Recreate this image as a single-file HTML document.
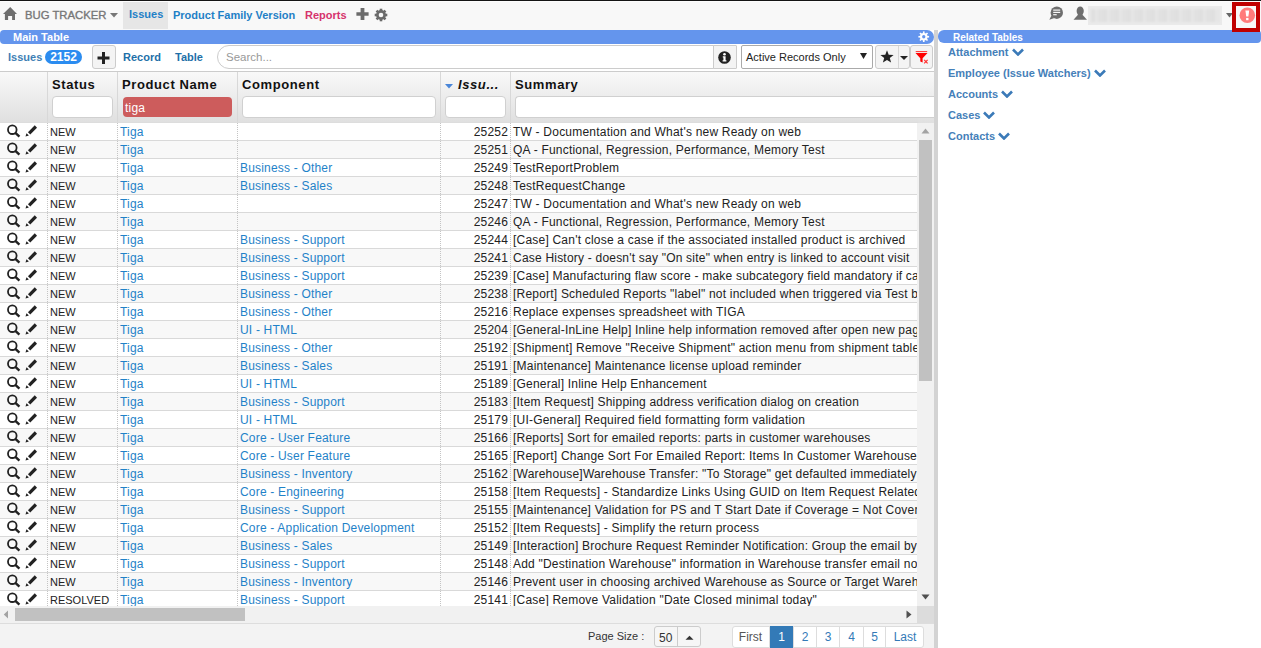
<!DOCTYPE html>
<html><head><meta charset="utf-8">
<style>
*{box-sizing:border-box}
html,body{margin:0;padding:0}
body{width:1261px;height:648px;overflow:hidden;position:relative;background:#fff;font-family:"Liberation Sans",sans-serif;color:#222}
.a{position:absolute}
#topline{left:0;top:0;width:1261px;height:1px;background:#141414}
#nav{left:0;top:1px;width:1261px;height:29px;background:#f8f8f8;border-top:1px solid #fdfdfd}
.navt{position:absolute;font-size:11px;font-weight:bold;line-height:14px;white-space:nowrap}
#brand{left:25px;top:8px;font-size:11.3px;color:#777;font-weight:normal!important;-webkit-text-stroke:0.35px #777}
#tabIssues{left:123px;top:2px;width:45px;height:27px;background:#e6e6e6}
#tIssues{left:129px;top:7px;color:#1f80c6}
#tPFV{left:173px;top:8px;color:#1f80c6}
#tRep{left:305px;top:8px;color:#d6336c}
#blur{left:1088px;top:6px;width:134px;height:19px;background:#eaeaea;overflow:hidden}
#blur i{position:absolute;left:3px;top:3px;right:3px;bottom:3px;background:repeating-linear-gradient(90deg,#dfdfdf 0 4px,#e6e6e6 4px 7px,#e1e1e1 7px 12px);filter:blur(1.2px)}
#alertbox{left:1232px;top:2px;width:28px;height:30px;border:4px solid #c00000;background:#f8f8f8;z-index:5}
#mainbar{left:0;top:30px;width:934px;height:14px;background:#6495ed;border-radius:4px 7px 7px 4px}
#mainbar span{position:absolute;left:13px;top:0px;font:bold 11px/14px "Liberation Sans",sans-serif;color:#fff}
#relbar{left:938px;top:30px;width:323px;height:13px;background:#6495ed;border-radius:6px 4px 4px 6px}
#relbar span{position:absolute;left:15px;top:1px;font:bold 10px/13px "Liberation Sans",sans-serif;color:#fff}
#divider{left:934px;top:30px;width:4px;height:618px;background:#d3d3d3}
.rel{position:absolute;left:948px;font:bold 11px/14px "Liberation Sans",sans-serif;color:#4580b9;white-space:nowrap}
.rel svg{vertical-align:middle;margin-left:3px;position:relative;top:-1px}
/* toolbar */
#lblIssues{left:8px;top:50px;font:bold 11px/14px "Liberation Sans",sans-serif;color:#3f7fb5}
#badge{left:45px;top:50px;width:37px;height:14px;border-radius:7px;background:#2b8cf0;color:#fff;font:bold 12px/14px "Liberation Sans",sans-serif;text-align:center}
#btnPlus{left:92px;top:45px;width:24px;height:24px;background:#f4f4f4;border:1px solid #ccc;border-radius:3px}
#lblRecord{left:123px;top:50px;font:bold 11px/14px "Liberation Sans",sans-serif;color:#1e6fa8}
#lblTable{left:175px;top:50px;font:bold 11px/14px "Liberation Sans",sans-serif;color:#1e6fa8}
#search{left:217px;top:45px;width:497px;height:24px;border:1px solid #ccc;border-radius:12px 0 0 12px;background:#fff}
#search span{position:absolute;left:8px;top:4px;font:11.5px/14px "Liberation Sans",sans-serif;color:#999}
#btnInfo{left:713px;top:45px;width:24px;height:24px;background:#f4f4f4;border:1px solid #ccc;border-radius:0 1px 1px 0}
#select{left:741px;top:45px;width:132px;height:24px;border:1px solid #aaa;border-radius:2px;background:#fff}
#select span{position:absolute;left:4px;top:4px;font:11px/14px "Liberation Sans",sans-serif;color:#222}
#btnStar{left:875px;top:45px;width:35px;height:24px;background:#f4f4f4;border:1px solid #ccc;border-radius:3px}
#btnFilt{left:910px;top:45px;width:23px;height:24px;background:#f4f4f4;border:1px solid #ccc;border-radius:3px}
/* grid header */
#ghead{left:0;top:71px;width:918px;height:52px;border-top:1px solid #ccc;border-bottom:1px solid #ddd;background:linear-gradient(#f9f9f9,#e0e0e0)}
#gheadR{left:918px;top:71px;width:16px;height:52px;border-top:1px solid #ccc;background:linear-gradient(#f9f9f9,#e0e0e0)}
.hsep{position:absolute;top:72px;width:1px;height:50px;background:#d8d8d8}
.ht{position:absolute;top:77px;font:bold 13px/15px "Liberation Sans",sans-serif;letter-spacing:0.6px;color:#111;white-space:nowrap}
.fb{position:absolute;top:96px;height:22px;background:#fff;border:1px solid #d0d0d0;border-radius:4px}
/* rows */
.r{position:absolute;left:0;width:918px;height:18px;background:#fff;border-bottom:1px solid #d9d9d9;white-space:nowrap;overflow:hidden}
.r.alt{background:#f8f8f8}
.r .mg{position:absolute;left:6px;top:1px}
.r .pn{position:absolute;left:24px;top:1px}
.c{position:absolute;top:2px;font:12px/14px "Liberation Sans",sans-serif;letter-spacing:0.19px;color:#222}
.st{left:50px;font-size:11px;letter-spacing:0;top:2px}
.pr{left:120px;color:#1f82c8}
.co{left:240px;color:#1f82c8}
.no{left:440px;width:68px;text-align:right}
.su{left:513px;letter-spacing:0.21px}
.vsep{position:absolute;top:123px;width:1px;height:483px;border-left:1px dotted #c4c4c4}
/* scrollbars */
#vscroll{left:917px;top:123px;width:17px;height:483px;background:#f1f1f1}
#vthumb{left:919px;top:140px;width:13px;height:241px;background:#c1c1c1}
#hscroll{left:0;top:606px;width:917px;height:17px;background:#f1f1f1}
#hthumb{left:15px;top:608px;width:230px;height:13px;background:#c1c1c1}
#corner{left:917px;top:606px;width:17px;height:17px;background:#dcdcdc}
#footer{left:0;top:623px;width:934px;height:25px;background:#f3f3f3;border-top:1px solid #ddd}
.ft{position:absolute;font:12px/14px "Liberation Sans",sans-serif;color:#333;white-space:nowrap}
#psize{left:654px;top:626px;width:47px;height:21px;border:1px solid #ccc;border-radius:3px;background:#f6f6f6}
#pager{left:732px;top:626px;width:192px;height:22px;border:1px solid #ddd;border-radius:3px;background:#fff}
.pg{position:absolute;top:626px;height:22px;border-left:1px solid #ddd;font:12px/22px "Liberation Sans",sans-serif;color:#337ab7;text-align:center}
</style></head><body>
<div id="topline" class="a"></div>
<div id="nav" class="a"></div>
<svg class="a" style="left:3px;top:6px" width="15" height="15" viewBox="0 0 15 15"><path d="M7.2 0.9 L14 7.9 L12 7.9 L12 14 L9.1 14 L9.1 10 L5.1 10 L5.1 14 L1.9 14 L1.9 7.9 L0 7.9 Z" fill="#6e6e6e"/></svg>
<span id="brand" class="navt">BUG TRACKER</span>
<svg class="a" style="left:110px;top:13px" width="8" height="5" viewBox="0 0 8 5"><path d="M0 0 L8 0 L4 4.5 Z" fill="#777"/></svg>
<div id="tabIssues" class="a"></div>
<span id="tIssues" class="navt">Issues</span>
<span id="tPFV" class="navt">Product Family Version</span>
<span id="tRep" class="navt">Reports</span>
<svg class="a" style="left:356px;top:8px" width="13" height="12" viewBox="0 0 13 12"><path d="M4.6 0 H8.4 V4.2 H12.6 V7.8 H8.4 V12 H4.6 V7.8 H0.4 V4.2 H4.6 Z" fill="#6b6b6b"/></svg>
<svg class="a" style="left:374px;top:8px" width="14" height="14" viewBox="0 0 14 14"><g fill="#6b6b6b"><circle cx="7" cy="7" r="4.9"/><rect x="5.7" y="0.7" width="2.6" height="12.6"/><rect x="0.7" y="5.7" width="12.6" height="2.6"/><rect x="5.7" y="0.7" width="2.6" height="12.6" transform="rotate(45 7 7)"/><rect x="5.7" y="0.7" width="2.6" height="12.6" transform="rotate(-45 7 7)"/></g><circle cx="7" cy="7" r="2.3" fill="#f8f8f8"/></svg>
<svg class="a" style="left:1049px;top:6px" width="15" height="15" viewBox="0 0 15 15"><circle cx="7.8" cy="6.7" r="6.2" fill="#6e6e6e"/><path d="M2.5 9.5 L0.3 13.8 L5.5 12 Z" fill="#6e6e6e"/><rect x="4.2" y="3.5" width="7" height="1.2" fill="#f8f8f8"/><rect x="4.2" y="5.8" width="7" height="1.2" fill="#f8f8f8"/><rect x="4.2" y="8.1" width="3.5" height="1.2" fill="#f8f8f8"/></svg>
<svg class="a" style="left:1073px;top:6px" width="15" height="15" viewBox="0 0 15 15"><ellipse cx="7.2" cy="5" rx="3.6" ry="4.6" fill="#6e6e6e"/><path d="M5.2 8.5 H9.2 L14 13.8 H0.5 Z" fill="#6e6e6e"/></svg>
<div id="blur" class="a"><i></i></div>
<svg class="a" style="left:1226px;top:13px" width="7" height="5" viewBox="0 0 7 5"><path d="M0 0 L7 0 L3.5 4.5 Z" fill="#666"/></svg>
<div id="alertbox" class="a"></div>
<svg class="a" style="left:1239px;top:7px;z-index:6" width="17" height="17" viewBox="0 0 17 17"><circle cx="8.3" cy="8.3" r="7.8" fill="#ff7b7b"/><path d="M6.4 3.4 H10.2 L9.4 9.6 H7.2 Z" fill="#fff"/><rect x="7.1" y="10.9" width="2.4" height="2.3" fill="#fff"/></svg>

<div id="mainbar" class="a"><span>Main Table</span></div>
<svg class="a" style="left:918px;top:30.5px" width="11.5" height="11.5" viewBox="0 0 14 14"><g fill="#fff"><circle cx="7" cy="7" r="4.6"/><rect x="6" y="0.5" width="2" height="13"/><rect x="0.5" y="6" width="13" height="2"/><rect x="6" y="0.5" width="2" height="13" transform="rotate(45 7 7)"/><rect x="6" y="0.5" width="2" height="13" transform="rotate(-45 7 7)"/></g><circle cx="7" cy="7" r="2" fill="#6495ed"/></svg>
<div id="divider" class="a"></div>
<div id="relbar" class="a"><span>Related Tables</span></div>
<div class="rel" style="top:45px">Attachment<svg width="12" height="8" viewBox="0 0 12 8"><path d="M1 1.5 L6 6.5 L11 1.5" fill="none" stroke="#3b7ab8" stroke-width="2.6"/></svg></div>
<div class="rel" style="top:66px">Employee (Issue Watchers)<svg width="12" height="8" viewBox="0 0 12 8"><path d="M1 1.5 L6 6.5 L11 1.5" fill="none" stroke="#3b7ab8" stroke-width="2.6"/></svg></div>
<div class="rel" style="top:87px">Accounts<svg width="12" height="8" viewBox="0 0 12 8"><path d="M1 1.5 L6 6.5 L11 1.5" fill="none" stroke="#3b7ab8" stroke-width="2.6"/></svg></div>
<div class="rel" style="top:108px">Cases<svg width="12" height="8" viewBox="0 0 12 8"><path d="M1 1.5 L6 6.5 L11 1.5" fill="none" stroke="#3b7ab8" stroke-width="2.6"/></svg></div>
<div class="rel" style="top:129px">Contacts<svg width="12" height="8" viewBox="0 0 12 8"><path d="M1 1.5 L6 6.5 L11 1.5" fill="none" stroke="#3b7ab8" stroke-width="2.6"/></svg></div>

<span id="lblIssues" class="a">Issues</span>
<div id="badge" class="a">2152</div>
<div id="btnPlus" class="a"></div>
<svg class="a" style="left:97px;top:52px" width="13" height="12" viewBox="0 0 13 12"><path d="M5 0 H8 V4.5 H12.5 V7.5 H8 V12 H5 V7.5 H0.5 V4.5 H5 Z" fill="#222"/></svg>
<span id="lblRecord" class="a">Record</span>
<span id="lblTable" class="a">Table</span>
<div id="search" class="a"><span>Search...</span></div>
<div id="btnInfo" class="a"></div>
<svg class="a" style="left:718px;top:51px" width="13" height="13" viewBox="0 0 13 13"><circle cx="6.5" cy="6.5" r="6.3" fill="#222"/><circle cx="6.5" cy="3.2" r="1.3" fill="#fff"/><path d="M4.8 5.2 H7.6 V9.2 H8.4 V10.6 H4.6 V9.2 H5.4 V6.5 H4.8 Z" fill="#fff"/></svg>
<div id="select" class="a"><span>Active Records Only</span></div>
<svg class="a" style="left:860px;top:53px" width="7" height="6" viewBox="0 0 7 6"><path d="M0 0 H7 L3.5 6 Z" fill="#222"/></svg>
<div id="btnStar" class="a"></div>
<div class="a" style="left:898px;top:46px;width:1px;height:22px;background:#d6d6d6"></div>
<svg class="a" style="left:880px;top:50px" width="14" height="13" viewBox="0 0 14 13"><path d="M7 0.3 L8.7 4.8 L13.6 4.9 L9.8 7.9 L11.1 12.6 L7 9.9 L2.9 12.6 L4.2 7.9 L0.4 4.9 L5.3 4.8 Z" fill="#222"/></svg>
<svg class="a" style="left:900px;top:56px" width="8" height="4" viewBox="0 0 8 4"><path d="M0 0 H8 L4 4 Z" fill="#222"/></svg>
<div id="btnFilt" class="a"></div>
<svg class="a" style="left:915px;top:51px" width="14" height="13" viewBox="0 0 14 13"><rect x="0.7" y="0" width="11.5" height="1.1" fill="#ff4040"/><path d="M0.5 2 H12.5 L7.6 7.2 V11.6 L5.3 10.6 V7.2 Z" fill="#ff0000"/><path d="M9.2 8.9 L12.6 12.3 M12.6 8.9 L9.2 12.3" stroke="#ff3030" stroke-width="1.2"/></svg>

<div id="ghead" class="a"></div>
<div id="gheadR" class="a"></div>
<div class="hsep" style="left:47px"></div>
<div class="hsep" style="left:117px"></div>
<div class="hsep" style="left:237px"></div>
<div class="hsep" style="left:440px"></div>
<div class="hsep" style="left:510px"></div>
<span class="ht" style="left:52px">Status</span>
<span class="ht" style="left:122px">Product Name</span>
<span class="ht" style="left:242px">Component</span>
<svg class="a" style="left:445px;top:84px" width="8" height="5" viewBox="0 0 8 5"><path d="M0 0 H8 L4 4.5 Z" fill="#4a86d8"/></svg>
<span class="ht" style="left:458px;font-style:italic">Issu...</span>
<span class="ht" style="left:515px">Summary</span>
<div class="fb" style="left:52px;width:61px"></div>
<div class="fb" style="left:123px;top:97px;width:109px;height:20px;background:#cd5c5c;border:none"><span style="position:absolute;left:2px;top:4px;font:12px/14px 'Liberation Sans',sans-serif;color:#fff;letter-spacing:0.2px">tiga</span></div>
<div class="fb" style="left:242px;width:194px"></div>
<div class="fb" style="left:445px;width:61px"></div>
<div class="fb" style="left:515px;width:419px;border-right:none;border-radius:4px 0 0 4px"></div>

<div class="r" style="top:123px"><svg class="mg" width="15" height="15" viewBox="0 0 15 15"><circle cx="6.3" cy="5.7" r="4.3" fill="none" stroke="#222" stroke-width="1.8"/><path d="M9.4 8.9 L13.4 12.7" stroke="#222" stroke-width="2.4"/></svg><svg class="pn" width="15" height="15" viewBox="0 0 15 15"><path d="M11.9 2.5 L5.1 9.3" stroke="#222" stroke-width="3.2"/><path d="M1.5 12.6 L2.5 9.2 L4.9 11.6 Z" fill="#222"/></svg><span class="c st">NEW</span><span class="c pr">Tiga</span><span class="c co"></span><span class="c no">25252</span><span class="c su">TW - Documentation and What's new Ready on web</span></div>
<div class="r alt" style="top:141px"><svg class="mg" width="15" height="15" viewBox="0 0 15 15"><circle cx="6.3" cy="5.7" r="4.3" fill="none" stroke="#222" stroke-width="1.8"/><path d="M9.4 8.9 L13.4 12.7" stroke="#222" stroke-width="2.4"/></svg><svg class="pn" width="15" height="15" viewBox="0 0 15 15"><path d="M11.9 2.5 L5.1 9.3" stroke="#222" stroke-width="3.2"/><path d="M1.5 12.6 L2.5 9.2 L4.9 11.6 Z" fill="#222"/></svg><span class="c st">NEW</span><span class="c pr">Tiga</span><span class="c co"></span><span class="c no">25251</span><span class="c su">QA - Functional, Regression, Performance, Memory Test</span></div>
<div class="r" style="top:159px"><svg class="mg" width="15" height="15" viewBox="0 0 15 15"><circle cx="6.3" cy="5.7" r="4.3" fill="none" stroke="#222" stroke-width="1.8"/><path d="M9.4 8.9 L13.4 12.7" stroke="#222" stroke-width="2.4"/></svg><svg class="pn" width="15" height="15" viewBox="0 0 15 15"><path d="M11.9 2.5 L5.1 9.3" stroke="#222" stroke-width="3.2"/><path d="M1.5 12.6 L2.5 9.2 L4.9 11.6 Z" fill="#222"/></svg><span class="c st">NEW</span><span class="c pr">Tiga</span><span class="c co">Business - Other</span><span class="c no">25249</span><span class="c su">TestReportProblem</span></div>
<div class="r alt" style="top:177px"><svg class="mg" width="15" height="15" viewBox="0 0 15 15"><circle cx="6.3" cy="5.7" r="4.3" fill="none" stroke="#222" stroke-width="1.8"/><path d="M9.4 8.9 L13.4 12.7" stroke="#222" stroke-width="2.4"/></svg><svg class="pn" width="15" height="15" viewBox="0 0 15 15"><path d="M11.9 2.5 L5.1 9.3" stroke="#222" stroke-width="3.2"/><path d="M1.5 12.6 L2.5 9.2 L4.9 11.6 Z" fill="#222"/></svg><span class="c st">NEW</span><span class="c pr">Tiga</span><span class="c co">Business - Sales</span><span class="c no">25248</span><span class="c su">TestRequestChange</span></div>
<div class="r" style="top:195px"><svg class="mg" width="15" height="15" viewBox="0 0 15 15"><circle cx="6.3" cy="5.7" r="4.3" fill="none" stroke="#222" stroke-width="1.8"/><path d="M9.4 8.9 L13.4 12.7" stroke="#222" stroke-width="2.4"/></svg><svg class="pn" width="15" height="15" viewBox="0 0 15 15"><path d="M11.9 2.5 L5.1 9.3" stroke="#222" stroke-width="3.2"/><path d="M1.5 12.6 L2.5 9.2 L4.9 11.6 Z" fill="#222"/></svg><span class="c st">NEW</span><span class="c pr">Tiga</span><span class="c co"></span><span class="c no">25247</span><span class="c su">TW - Documentation and What's new Ready on web</span></div>
<div class="r alt" style="top:213px"><svg class="mg" width="15" height="15" viewBox="0 0 15 15"><circle cx="6.3" cy="5.7" r="4.3" fill="none" stroke="#222" stroke-width="1.8"/><path d="M9.4 8.9 L13.4 12.7" stroke="#222" stroke-width="2.4"/></svg><svg class="pn" width="15" height="15" viewBox="0 0 15 15"><path d="M11.9 2.5 L5.1 9.3" stroke="#222" stroke-width="3.2"/><path d="M1.5 12.6 L2.5 9.2 L4.9 11.6 Z" fill="#222"/></svg><span class="c st">NEW</span><span class="c pr">Tiga</span><span class="c co"></span><span class="c no">25246</span><span class="c su">QA - Functional, Regression, Performance, Memory Test</span></div>
<div class="r" style="top:231px"><svg class="mg" width="15" height="15" viewBox="0 0 15 15"><circle cx="6.3" cy="5.7" r="4.3" fill="none" stroke="#222" stroke-width="1.8"/><path d="M9.4 8.9 L13.4 12.7" stroke="#222" stroke-width="2.4"/></svg><svg class="pn" width="15" height="15" viewBox="0 0 15 15"><path d="M11.9 2.5 L5.1 9.3" stroke="#222" stroke-width="3.2"/><path d="M1.5 12.6 L2.5 9.2 L4.9 11.6 Z" fill="#222"/></svg><span class="c st">NEW</span><span class="c pr">Tiga</span><span class="c co">Business - Support</span><span class="c no">25244</span><span class="c su">[Case] Can't close a case if the associated installed product is archived</span></div>
<div class="r alt" style="top:249px"><svg class="mg" width="15" height="15" viewBox="0 0 15 15"><circle cx="6.3" cy="5.7" r="4.3" fill="none" stroke="#222" stroke-width="1.8"/><path d="M9.4 8.9 L13.4 12.7" stroke="#222" stroke-width="2.4"/></svg><svg class="pn" width="15" height="15" viewBox="0 0 15 15"><path d="M11.9 2.5 L5.1 9.3" stroke="#222" stroke-width="3.2"/><path d="M1.5 12.6 L2.5 9.2 L4.9 11.6 Z" fill="#222"/></svg><span class="c st">NEW</span><span class="c pr">Tiga</span><span class="c co">Business - Support</span><span class="c no">25241</span><span class="c su">Case History - doesn't say "On site" when entry is linked to account visit</span></div>
<div class="r" style="top:267px"><svg class="mg" width="15" height="15" viewBox="0 0 15 15"><circle cx="6.3" cy="5.7" r="4.3" fill="none" stroke="#222" stroke-width="1.8"/><path d="M9.4 8.9 L13.4 12.7" stroke="#222" stroke-width="2.4"/></svg><svg class="pn" width="15" height="15" viewBox="0 0 15 15"><path d="M11.9 2.5 L5.1 9.3" stroke="#222" stroke-width="3.2"/><path d="M1.5 12.6 L2.5 9.2 L4.9 11.6 Z" fill="#222"/></svg><span class="c st">NEW</span><span class="c pr">Tiga</span><span class="c co">Business - Support</span><span class="c no">25239</span><span class="c su">[Case] Manufacturing flaw score - make subcategory field mandatory if category is flaw</span></div>
<div class="r alt" style="top:285px"><svg class="mg" width="15" height="15" viewBox="0 0 15 15"><circle cx="6.3" cy="5.7" r="4.3" fill="none" stroke="#222" stroke-width="1.8"/><path d="M9.4 8.9 L13.4 12.7" stroke="#222" stroke-width="2.4"/></svg><svg class="pn" width="15" height="15" viewBox="0 0 15 15"><path d="M11.9 2.5 L5.1 9.3" stroke="#222" stroke-width="3.2"/><path d="M1.5 12.6 L2.5 9.2 L4.9 11.6 Z" fill="#222"/></svg><span class="c st">NEW</span><span class="c pr">Tiga</span><span class="c co">Business - Other</span><span class="c no">25238</span><span class="c su">[Report] Scheduled Reports "label" not included when triggered via Test button</span></div>
<div class="r" style="top:303px"><svg class="mg" width="15" height="15" viewBox="0 0 15 15"><circle cx="6.3" cy="5.7" r="4.3" fill="none" stroke="#222" stroke-width="1.8"/><path d="M9.4 8.9 L13.4 12.7" stroke="#222" stroke-width="2.4"/></svg><svg class="pn" width="15" height="15" viewBox="0 0 15 15"><path d="M11.9 2.5 L5.1 9.3" stroke="#222" stroke-width="3.2"/><path d="M1.5 12.6 L2.5 9.2 L4.9 11.6 Z" fill="#222"/></svg><span class="c st">NEW</span><span class="c pr">Tiga</span><span class="c co">Business - Other</span><span class="c no">25216</span><span class="c su">Replace expenses spreadsheet with TIGA</span></div>
<div class="r alt" style="top:321px"><svg class="mg" width="15" height="15" viewBox="0 0 15 15"><circle cx="6.3" cy="5.7" r="4.3" fill="none" stroke="#222" stroke-width="1.8"/><path d="M9.4 8.9 L13.4 12.7" stroke="#222" stroke-width="2.4"/></svg><svg class="pn" width="15" height="15" viewBox="0 0 15 15"><path d="M11.9 2.5 L5.1 9.3" stroke="#222" stroke-width="3.2"/><path d="M1.5 12.6 L2.5 9.2 L4.9 11.6 Z" fill="#222"/></svg><span class="c st">NEW</span><span class="c pr">Tiga</span><span class="c co">UI - HTML</span><span class="c no">25204</span><span class="c su">[General-InLine Help] Inline help information removed after open new page</span></div>
<div class="r" style="top:339px"><svg class="mg" width="15" height="15" viewBox="0 0 15 15"><circle cx="6.3" cy="5.7" r="4.3" fill="none" stroke="#222" stroke-width="1.8"/><path d="M9.4 8.9 L13.4 12.7" stroke="#222" stroke-width="2.4"/></svg><svg class="pn" width="15" height="15" viewBox="0 0 15 15"><path d="M11.9 2.5 L5.1 9.3" stroke="#222" stroke-width="3.2"/><path d="M1.5 12.6 L2.5 9.2 L4.9 11.6 Z" fill="#222"/></svg><span class="c st">NEW</span><span class="c pr">Tiga</span><span class="c co">Business - Other</span><span class="c no">25192</span><span class="c su">[Shipment] Remove "Receive Shipment" action menu from shipment table</span></div>
<div class="r alt" style="top:357px"><svg class="mg" width="15" height="15" viewBox="0 0 15 15"><circle cx="6.3" cy="5.7" r="4.3" fill="none" stroke="#222" stroke-width="1.8"/><path d="M9.4 8.9 L13.4 12.7" stroke="#222" stroke-width="2.4"/></svg><svg class="pn" width="15" height="15" viewBox="0 0 15 15"><path d="M11.9 2.5 L5.1 9.3" stroke="#222" stroke-width="3.2"/><path d="M1.5 12.6 L2.5 9.2 L4.9 11.6 Z" fill="#222"/></svg><span class="c st">NEW</span><span class="c pr">Tiga</span><span class="c co">Business - Sales</span><span class="c no">25191</span><span class="c su">[Maintenance] Maintenance license upload reminder</span></div>
<div class="r" style="top:375px"><svg class="mg" width="15" height="15" viewBox="0 0 15 15"><circle cx="6.3" cy="5.7" r="4.3" fill="none" stroke="#222" stroke-width="1.8"/><path d="M9.4 8.9 L13.4 12.7" stroke="#222" stroke-width="2.4"/></svg><svg class="pn" width="15" height="15" viewBox="0 0 15 15"><path d="M11.9 2.5 L5.1 9.3" stroke="#222" stroke-width="3.2"/><path d="M1.5 12.6 L2.5 9.2 L4.9 11.6 Z" fill="#222"/></svg><span class="c st">NEW</span><span class="c pr">Tiga</span><span class="c co">UI - HTML</span><span class="c no">25189</span><span class="c su">[General] Inline Help Enhancement</span></div>
<div class="r alt" style="top:393px"><svg class="mg" width="15" height="15" viewBox="0 0 15 15"><circle cx="6.3" cy="5.7" r="4.3" fill="none" stroke="#222" stroke-width="1.8"/><path d="M9.4 8.9 L13.4 12.7" stroke="#222" stroke-width="2.4"/></svg><svg class="pn" width="15" height="15" viewBox="0 0 15 15"><path d="M11.9 2.5 L5.1 9.3" stroke="#222" stroke-width="3.2"/><path d="M1.5 12.6 L2.5 9.2 L4.9 11.6 Z" fill="#222"/></svg><span class="c st">NEW</span><span class="c pr">Tiga</span><span class="c co">Business - Support</span><span class="c no">25183</span><span class="c su">[Item Request] Shipping address verification dialog on creation</span></div>
<div class="r" style="top:411px"><svg class="mg" width="15" height="15" viewBox="0 0 15 15"><circle cx="6.3" cy="5.7" r="4.3" fill="none" stroke="#222" stroke-width="1.8"/><path d="M9.4 8.9 L13.4 12.7" stroke="#222" stroke-width="2.4"/></svg><svg class="pn" width="15" height="15" viewBox="0 0 15 15"><path d="M11.9 2.5 L5.1 9.3" stroke="#222" stroke-width="3.2"/><path d="M1.5 12.6 L2.5 9.2 L4.9 11.6 Z" fill="#222"/></svg><span class="c st">NEW</span><span class="c pr">Tiga</span><span class="c co">UI - HTML</span><span class="c no">25179</span><span class="c su">[UI-General] Required field formatting form validation</span></div>
<div class="r alt" style="top:429px"><svg class="mg" width="15" height="15" viewBox="0 0 15 15"><circle cx="6.3" cy="5.7" r="4.3" fill="none" stroke="#222" stroke-width="1.8"/><path d="M9.4 8.9 L13.4 12.7" stroke="#222" stroke-width="2.4"/></svg><svg class="pn" width="15" height="15" viewBox="0 0 15 15"><path d="M11.9 2.5 L5.1 9.3" stroke="#222" stroke-width="3.2"/><path d="M1.5 12.6 L2.5 9.2 L4.9 11.6 Z" fill="#222"/></svg><span class="c st">NEW</span><span class="c pr">Tiga</span><span class="c co">Core - User Feature</span><span class="c no">25166</span><span class="c su">[Reports] Sort for emailed reports: parts in customer warehouses</span></div>
<div class="r" style="top:447px"><svg class="mg" width="15" height="15" viewBox="0 0 15 15"><circle cx="6.3" cy="5.7" r="4.3" fill="none" stroke="#222" stroke-width="1.8"/><path d="M9.4 8.9 L13.4 12.7" stroke="#222" stroke-width="2.4"/></svg><svg class="pn" width="15" height="15" viewBox="0 0 15 15"><path d="M11.9 2.5 L5.1 9.3" stroke="#222" stroke-width="3.2"/><path d="M1.5 12.6 L2.5 9.2 L4.9 11.6 Z" fill="#222"/></svg><span class="c st">NEW</span><span class="c pr">Tiga</span><span class="c co">Core - User Feature</span><span class="c no">25165</span><span class="c su">[Report] Change Sort For Emailed Report: Items In Customer Warehouses</span></div>
<div class="r alt" style="top:465px"><svg class="mg" width="15" height="15" viewBox="0 0 15 15"><circle cx="6.3" cy="5.7" r="4.3" fill="none" stroke="#222" stroke-width="1.8"/><path d="M9.4 8.9 L13.4 12.7" stroke="#222" stroke-width="2.4"/></svg><svg class="pn" width="15" height="15" viewBox="0 0 15 15"><path d="M11.9 2.5 L5.1 9.3" stroke="#222" stroke-width="3.2"/><path d="M1.5 12.6 L2.5 9.2 L4.9 11.6 Z" fill="#222"/></svg><span class="c st">NEW</span><span class="c pr">Tiga</span><span class="c co">Business - Inventory</span><span class="c no">25162</span><span class="c su">[Warehouse]Warehouse Transfer: "To Storage" get defaulted immediately</span></div>
<div class="r" style="top:483px"><svg class="mg" width="15" height="15" viewBox="0 0 15 15"><circle cx="6.3" cy="5.7" r="4.3" fill="none" stroke="#222" stroke-width="1.8"/><path d="M9.4 8.9 L13.4 12.7" stroke="#222" stroke-width="2.4"/></svg><svg class="pn" width="15" height="15" viewBox="0 0 15 15"><path d="M11.9 2.5 L5.1 9.3" stroke="#222" stroke-width="3.2"/><path d="M1.5 12.6 L2.5 9.2 L4.9 11.6 Z" fill="#222"/></svg><span class="c st">NEW</span><span class="c pr">Tiga</span><span class="c co">Core - Engineering</span><span class="c no">25158</span><span class="c su">[Item Requests] - Standardize Links Using GUID on Item Request Related</span></div>
<div class="r alt" style="top:501px"><svg class="mg" width="15" height="15" viewBox="0 0 15 15"><circle cx="6.3" cy="5.7" r="4.3" fill="none" stroke="#222" stroke-width="1.8"/><path d="M9.4 8.9 L13.4 12.7" stroke="#222" stroke-width="2.4"/></svg><svg class="pn" width="15" height="15" viewBox="0 0 15 15"><path d="M11.9 2.5 L5.1 9.3" stroke="#222" stroke-width="3.2"/><path d="M1.5 12.6 L2.5 9.2 L4.9 11.6 Z" fill="#222"/></svg><span class="c st">NEW</span><span class="c pr">Tiga</span><span class="c co">Business - Support</span><span class="c no">25155</span><span class="c su">[Maintenance] Validation for PS and T Start Date if Coverage = Not Covered</span></div>
<div class="r" style="top:519px"><svg class="mg" width="15" height="15" viewBox="0 0 15 15"><circle cx="6.3" cy="5.7" r="4.3" fill="none" stroke="#222" stroke-width="1.8"/><path d="M9.4 8.9 L13.4 12.7" stroke="#222" stroke-width="2.4"/></svg><svg class="pn" width="15" height="15" viewBox="0 0 15 15"><path d="M11.9 2.5 L5.1 9.3" stroke="#222" stroke-width="3.2"/><path d="M1.5 12.6 L2.5 9.2 L4.9 11.6 Z" fill="#222"/></svg><span class="c st">NEW</span><span class="c pr">Tiga</span><span class="c co">Core - Application Development</span><span class="c no">25152</span><span class="c su">[Item Requests] - Simplify the return process</span></div>
<div class="r alt" style="top:537px"><svg class="mg" width="15" height="15" viewBox="0 0 15 15"><circle cx="6.3" cy="5.7" r="4.3" fill="none" stroke="#222" stroke-width="1.8"/><path d="M9.4 8.9 L13.4 12.7" stroke="#222" stroke-width="2.4"/></svg><svg class="pn" width="15" height="15" viewBox="0 0 15 15"><path d="M11.9 2.5 L5.1 9.3" stroke="#222" stroke-width="3.2"/><path d="M1.5 12.6 L2.5 9.2 L4.9 11.6 Z" fill="#222"/></svg><span class="c st">NEW</span><span class="c pr">Tiga</span><span class="c co">Business - Sales</span><span class="c no">25149</span><span class="c su">[Interaction] Brochure Request Reminder Notification: Group the email by</span></div>
<div class="r" style="top:555px"><svg class="mg" width="15" height="15" viewBox="0 0 15 15"><circle cx="6.3" cy="5.7" r="4.3" fill="none" stroke="#222" stroke-width="1.8"/><path d="M9.4 8.9 L13.4 12.7" stroke="#222" stroke-width="2.4"/></svg><svg class="pn" width="15" height="15" viewBox="0 0 15 15"><path d="M11.9 2.5 L5.1 9.3" stroke="#222" stroke-width="3.2"/><path d="M1.5 12.6 L2.5 9.2 L4.9 11.6 Z" fill="#222"/></svg><span class="c st">NEW</span><span class="c pr">Tiga</span><span class="c co">Business - Support</span><span class="c no">25148</span><span class="c su">Add "Destination Warehouse" information in Warehouse transfer email notification</span></div>
<div class="r alt" style="top:573px"><svg class="mg" width="15" height="15" viewBox="0 0 15 15"><circle cx="6.3" cy="5.7" r="4.3" fill="none" stroke="#222" stroke-width="1.8"/><path d="M9.4 8.9 L13.4 12.7" stroke="#222" stroke-width="2.4"/></svg><svg class="pn" width="15" height="15" viewBox="0 0 15 15"><path d="M11.9 2.5 L5.1 9.3" stroke="#222" stroke-width="3.2"/><path d="M1.5 12.6 L2.5 9.2 L4.9 11.6 Z" fill="#222"/></svg><span class="c st">NEW</span><span class="c pr">Tiga</span><span class="c co">Business - Inventory</span><span class="c no">25146</span><span class="c su">Prevent user in choosing archived Warehouse as Source or Target Warehouse</span></div>
<div class="r" style="top:591px"><svg class="mg" width="15" height="15" viewBox="0 0 15 15"><circle cx="6.3" cy="5.7" r="4.3" fill="none" stroke="#222" stroke-width="1.8"/><path d="M9.4 8.9 L13.4 12.7" stroke="#222" stroke-width="2.4"/></svg><svg class="pn" width="15" height="15" viewBox="0 0 15 15"><path d="M11.9 2.5 L5.1 9.3" stroke="#222" stroke-width="3.2"/><path d="M1.5 12.6 L2.5 9.2 L4.9 11.6 Z" fill="#222"/></svg><span class="c st">RESOLVED</span><span class="c pr">Tiga</span><span class="c co">Business - Support</span><span class="c no">25141</span><span class="c su">[Case] Remove Validation "Date Closed minimal today"</span></div>
<div class="vsep" style="left:47px"></div>
<div class="vsep" style="left:117px"></div>
<div class="vsep" style="left:237px"></div>
<div class="vsep" style="left:440px"></div>
<div class="vsep" style="left:510px"></div>

<div id="vscroll" class="a"></div>
<div id="vthumb" class="a"></div>
<svg class="a" style="left:921px;top:128px" width="9" height="6" viewBox="0 0 9 6"><path d="M0.5 5.5 H8.5 L4.5 0.5 Z" fill="#a3a3a3"/></svg>
<svg class="a" style="left:921px;top:594px" width="9" height="6" viewBox="0 0 9 6"><path d="M0.5 0.5 H8.5 L4.5 5.5 Z" fill="#505050"/></svg>
<div id="hscroll" class="a"></div>
<div id="hthumb" class="a"></div>
<svg class="a" style="left:3px;top:610px" width="6" height="9" viewBox="0 0 6 9"><path d="M5 0.5 V8.5 L0.8 4.5 Z" fill="#a3a3a3"/></svg>
<svg class="a" style="left:906px;top:610px" width="6" height="9" viewBox="0 0 6 9"><path d="M0.5 0.5 V8.5 L5.5 4.5 Z" fill="#505050"/></svg>
<div id="corner" class="a"></div>
<div id="footer" class="a"></div>
<span class="ft" style="left:588px;top:629px;font-size:11px">Page Size :</span>
<div id="psize" class="a"></div>
<span class="ft" style="left:659px;top:631px">50</span>
<div class="a" style="left:677px;top:627px;width:1px;height:19px;background:#ccc"></div>
<svg class="a" style="left:685px;top:635px" width="9" height="5" viewBox="0 0 9 5"><path d="M0.5 4.8 H8.5 L4.5 0.8 Z" fill="#333"/></svg>
<div id="pager" class="a"></div>
<span class="pg" style="left:732px;width:37px;border-left:none;color:#555">First</span>
<span class="pg" style="left:769px;width:24px;background:#337ab7;color:#fff">1</span>
<span class="pg" style="left:793px;width:23px">2</span>
<span class="pg" style="left:816px;width:23px">3</span>
<span class="pg" style="left:839px;width:24px">4</span>
<span class="pg" style="left:863px;width:22px">5</span>
<span class="pg" style="left:885px;width:39px">Last</span>
</body></html>
